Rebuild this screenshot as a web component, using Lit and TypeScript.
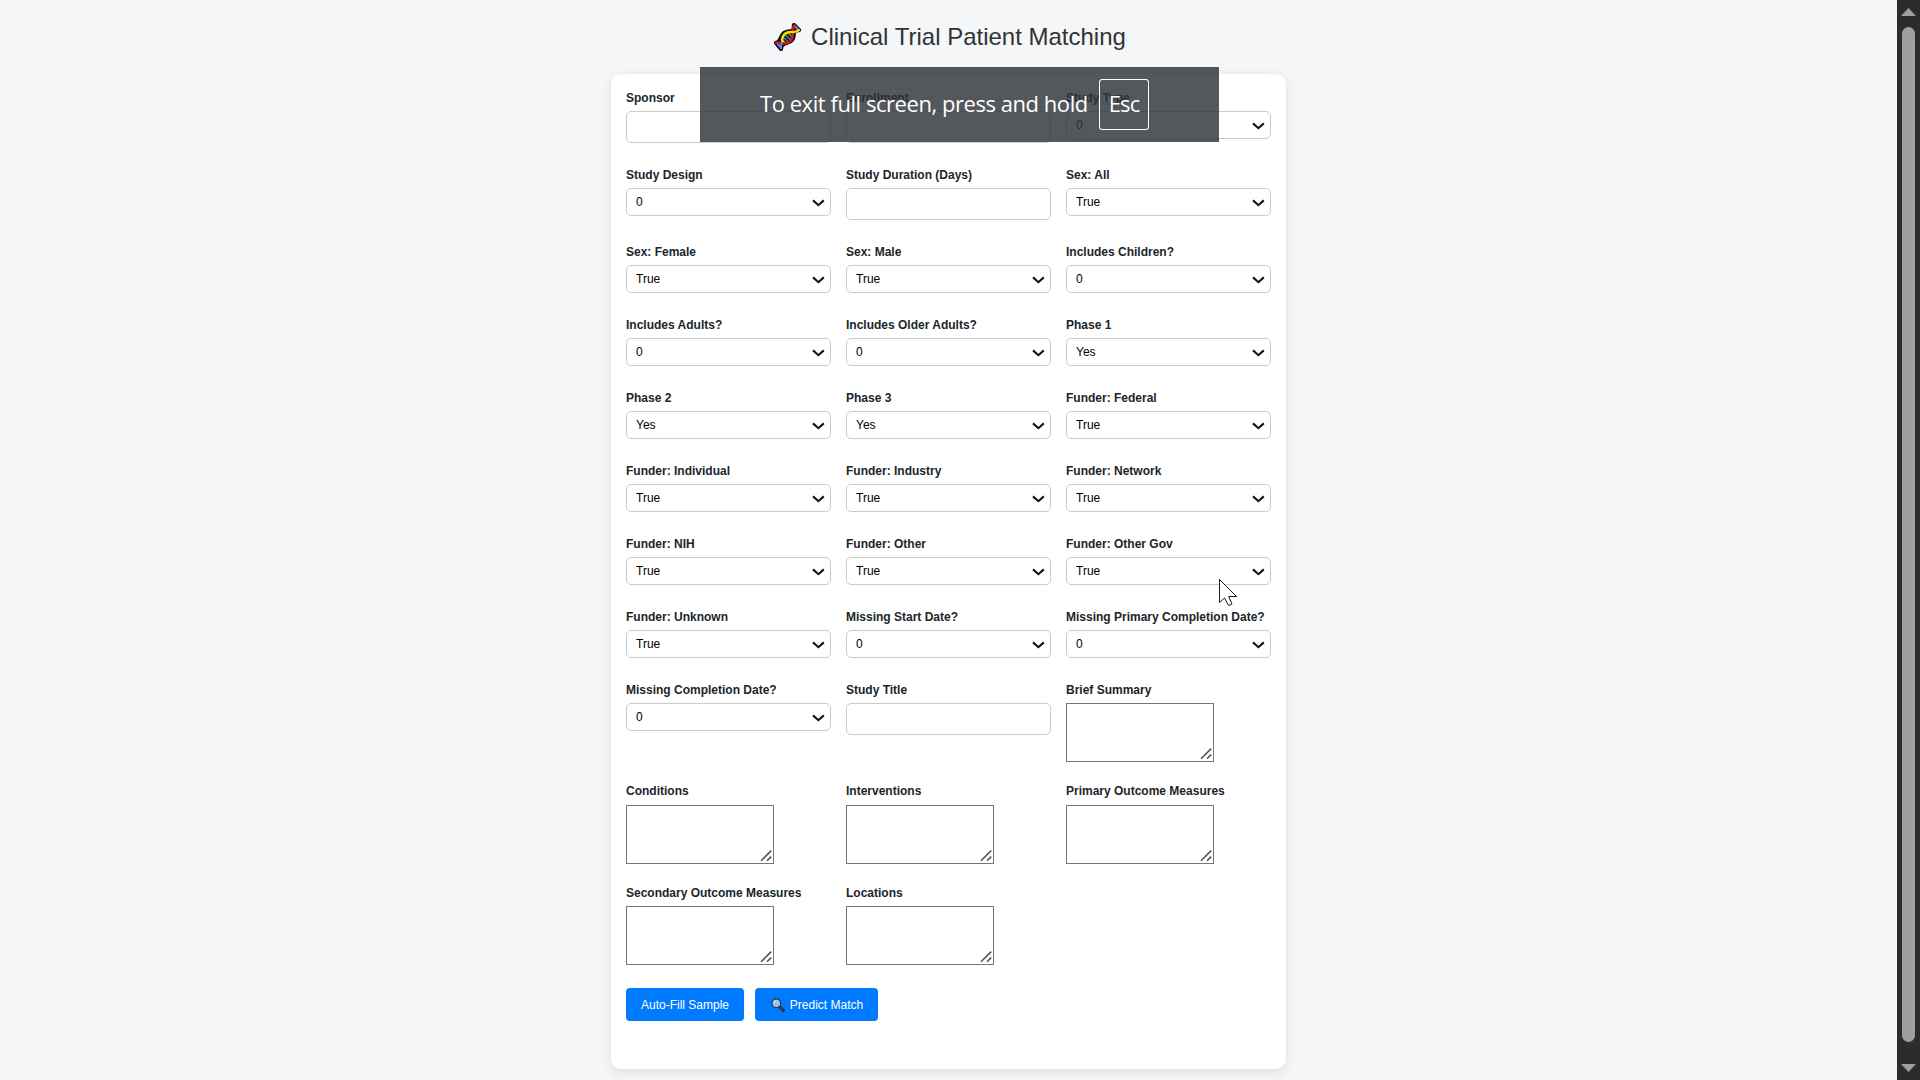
import { LitElement, html, css, svg } from "lit";
import { customElement, property } from "lit/decorators.js";

type Kind = "select" | "input" | "area";
interface Field { label: string; kind: Kind; value?: string; }

const sel = (label: string, value: string): Field => ({ label, kind: "select", value });
const input = (label: string): Field => ({ label, kind: "input" });
const area = (label: string): Field => ({ label, kind: "area" });

const FIELDS: Field[] = [
  input("Sponsor"), input("Enrollment"), sel("Study Type", "0"),
  sel("Study Design", "0"), input("Study Duration (Days)"), sel("Sex: All", "True"),
  sel("Sex: Female", "True"), sel("Sex: Male", "True"), sel("Includes Children?", "0"),
  sel("Includes Adults?", "0"), sel("Includes Older Adults?", "0"), sel("Phase 1", "Yes"),
  sel("Phase 2", "Yes"), sel("Phase 3", "Yes"), sel("Funder: Federal", "True"),
  sel("Funder: Individual", "True"), sel("Funder: Industry", "True"), sel("Funder: Network", "True"),
  sel("Funder: NIH", "True"), sel("Funder: Other", "True"), sel("Funder: Other Gov", "True"),
  sel("Funder: Unknown", "True"), sel("Missing Start Date?", "0"), sel("Missing Primary Completion Date?", "0"),
  sel("Missing Completion Date?", "0"), input("Study Title"), area("Brief Summary"),
  area("Conditions"), area("Interventions"), area("Primary Outcome Measures"),
  area("Secondary Outcome Measures"), area("Locations"),
];

@customElement("form-field")
export class FormField extends LitElement {
  @property() label = "";
  @property() kind: Kind = "input";
  @property() value = "";

  static styles = css`
    :host { display: flex; flex-direction: column; justify-content: flex-start; color: #212529; }
    .label { display: block; height: 22px; line-height: 18px; font-size: 12px; font-weight: 700; white-space: nowrap; }
    :host([raised]) .label { line-height: 16px; }
    .select, .input { box-sizing: border-box; width: 205px; border: 1px solid #ccc; border-radius: 5px; background: #fff; }
    .select { display: flex; align-items: center; justify-content: space-between; height: 28px; padding: 0 5px 1px 9px; font-size: 12px; color: #000; }
    .chevron { display: block; margin-top: 3px; }
    .input { height: 32px; }
    .area { box-sizing: border-box; display: flex; align-items: flex-end; justify-content: flex-end; width: 148px; height: 59px; padding: 1px; border: 1px solid #767676; background: #fff; }
    .grip { display: block; }
  `;

  private control() {
    if (this.kind === "select") {
      return html`<div class="select" role="combobox">
        <span>${this.value}</span>
        <svg class="chevron" width="14" height="8" viewBox="0 0 14 8"><path d="M2 1.4 L7.4 6.2 L12.8 1.4" fill="none" stroke="#101010" stroke-width="2.1"/></svg>
      </div>`;
    }
    if (this.kind === "area") {
      return html`<div class="area" role="textbox">
        <svg class="grip" width="12" height="13" viewBox="0 0 12 13"><path d="M1 11.8 L11.2 1.6 M7 11.8 L11.2 7.6" fill="none" stroke="#555" stroke-width="1.6"/></svg>
      </div>`;
    }
    return html`<div class="input" role="textbox"></div>`;
  }

  render() {
    return html`<span class="label">${this.label}</span>${this.control()}`;
  }
}

const dna = svg`
  <g fill="none" stroke-linecap="round" stroke-linejoin="round">
    <path d="M2 20 C6 20 6 15 9 11 S18 9 25 7 M7 26 C7 20 12 21 17 18 S19 5 20 2 M2 20 L7 26 M20 2 L25 7" stroke="#111" stroke-width="4.2"/>
    <path d="M8.5 17 C9 11 13 9 17 9 L20 9 C20 14 18 18 14 19.5 Z" fill="#111"/>
    <path d="M3.5 20.8 L7 24.5 M20.8 3 L24 6.5" stroke="#5b8df0" stroke-width="2"/>
    <path d="M12.3 12.8 L16.6 17" stroke="#4b8bf0" stroke-width="1.5"/>
    <path d="M15.3 11 L18 14" stroke="#35c853" stroke-width="1.4"/>
    <path d="M10.3 15 L14 18.6" stroke="#2fae54" stroke-width="1.2"/>
    <path d="M2.2 19.8 C6 19 7.5 21 12 20.2 S18.6 16 19 11" stroke="#e81224" stroke-width="2.4"/>
    <path d="M7 25.5 C7.5 23 7.2 22 7.6 20" stroke="#5b8df0" stroke-width="1.8"/>
    <path d="M8 17 C8.8 10.5 13 9 17 9 S23 9 25 7" stroke="#fce100" stroke-width="2.4"/>
    <path d="M18.4 7 C18.4 5.5 19 4.5 20.3 2.5" stroke="#e81224" stroke-width="2.4"/>
  </g>`;

@customElement("app-root")
export class AppRoot extends LitElement {
  static styles = css`
    :host { display: block; height: 1080px; overflow: hidden; position: relative; font-family: "Liberation Sans", Arial, sans-serif; background: #f4f6f8; }
    .window { display: flex; height: 1080px; }
    .page { flex: 1; display: flex; flex-direction: column; align-items: center; }
    .title { display: flex; align-items: center; height: 74px; margin: 0; padding-left: 3px; box-sizing: border-box; font-size: 24px; font-weight: 400; color: #333; gap: 9px; white-space: nowrap; }
    .dna { display: block; margin-top: -1px; }
    .card { box-sizing: border-box; width: 675px; height: 995px; padding: 15px; border-radius: 10px; background: #fff; box-shadow: 0 3px 12px rgba(0, 0, 0, .1); }
    .grid { display: grid; grid-template-columns: repeat(3, 205px); column-gap: 15px; grid-template-rows: 77px 77px repeat(6, 73px) 102px 101px 104px; }
    .actions { display: flex; gap: 11px; }
    .btn { box-sizing: border-box; display: flex; align-items: center; justify-content: center; height: 33px; border-radius: 4px; background: #007bff; color: #fff; font-size: 12px; white-space: nowrap; }
    .fill { width: 118px; }
    .predict { width: 123px; gap: 5px; padding-left: 1px; }
    .track { box-sizing: border-box; width: 23px; background: #2c2c2c; display: flex; flex-direction: column; align-items: center; padding: 8px 0; }
    .thumb { width: 13px; height: 1015px; margin: 11px 0 22px; border-radius: 7px; background: #9f9f9f; }
    .toast { position: absolute; left: 700px; top: 67px; width: 519px; height: 75px; box-sizing: border-box; padding-left: 60px; display: flex; align-items: center; background: rgba(46, 50, 55, .82); color: #fff; font-family: "Open Sans", "Noto Sans", sans-serif; font-size: 22px; white-space: nowrap; }
    .msg { width: 339px; letter-spacing: -.45px; padding-bottom: 4px; }
    .key { box-sizing: border-box; width: 50px; height: 51px; border: 1.5px solid #fff; outline: .5px solid rgba(255, 255, 255, .5); outline-offset: -1.5px; border-radius: 3px; display: flex; align-items: center; justify-content: center; padding-bottom: 4px; letter-spacing: -.9px; }
    .pointer { position: absolute; left: 1218px; top: 578px; }
  `;

  render() {
    return html`
      <div class="window">
        <main class="page">
          <h2 class="title">
            <svg class="dna" width="28" height="28" viewBox="0 0 28 28">${dna}</svg>
            <span class="name">Clinical Trial Patient Matching</span>
          </h2>
          <section class="card">
            <div class="grid">
              ${FIELDS.map((f, i) => html`<form-field ?raised=${i >= 27 && i < 30} .label=${f.label} .kind=${f.kind} .value=${f.value ?? ""}></form-field>`)}
            </div>
            <div class="actions">
              <div class="btn fill" role="button">Auto-Fill Sample</div>
              <div class="btn predict" role="button">
                <svg width="14" height="14" viewBox="0 0 14 14">
                  <path d="M8.6 8.6 L12.4 12.4" stroke="#2a2a2a" stroke-width="3" stroke-linecap="round"/>
                  <path d="M9.6 9.2 L12.2 11.8" stroke="#777" stroke-width=".8" stroke-linecap="round"/>
                  <circle cx="5.3" cy="5.3" r="4.4" fill="#8fc3ea" stroke="#263238" stroke-width="1.1"/>
                  <path d="M3 5 A2.6 2.6 0 0 1 5.3 2.8" fill="none" stroke="#d5ebfa" stroke-width="1"/>
                </svg>
                <span>Predict Match</span>
              </div>
            </div>
          </section>
        </main>
        <div class="track">
          <svg width="15" height="8" viewBox="0 0 15 8"><path d="M7.5 0 L15 8 H0 Z" fill="#9f9f9f"/></svg>
          <div class="thumb"></div>
          <svg width="15" height="8" viewBox="0 0 15 8"><path d="M0 0 H15 L7.5 8 Z" fill="#9f9f9f"/></svg>
        </div>
      </div>
      <div class="toast"><span class="msg">To exit full screen, press and hold</span><span class="key">Esc</span></div>
      <svg class="pointer" width="20" height="29" viewBox="0 0 20 29">
        <path d="M1.5 1.5 V24.5 L6.5 20 L10.5 27.5 L14 26 L10.7 18.5 H18.5 Z" fill="#fff" stroke="#1a1a26" stroke-width="1"/>
      </svg>
    `;
  }
}
